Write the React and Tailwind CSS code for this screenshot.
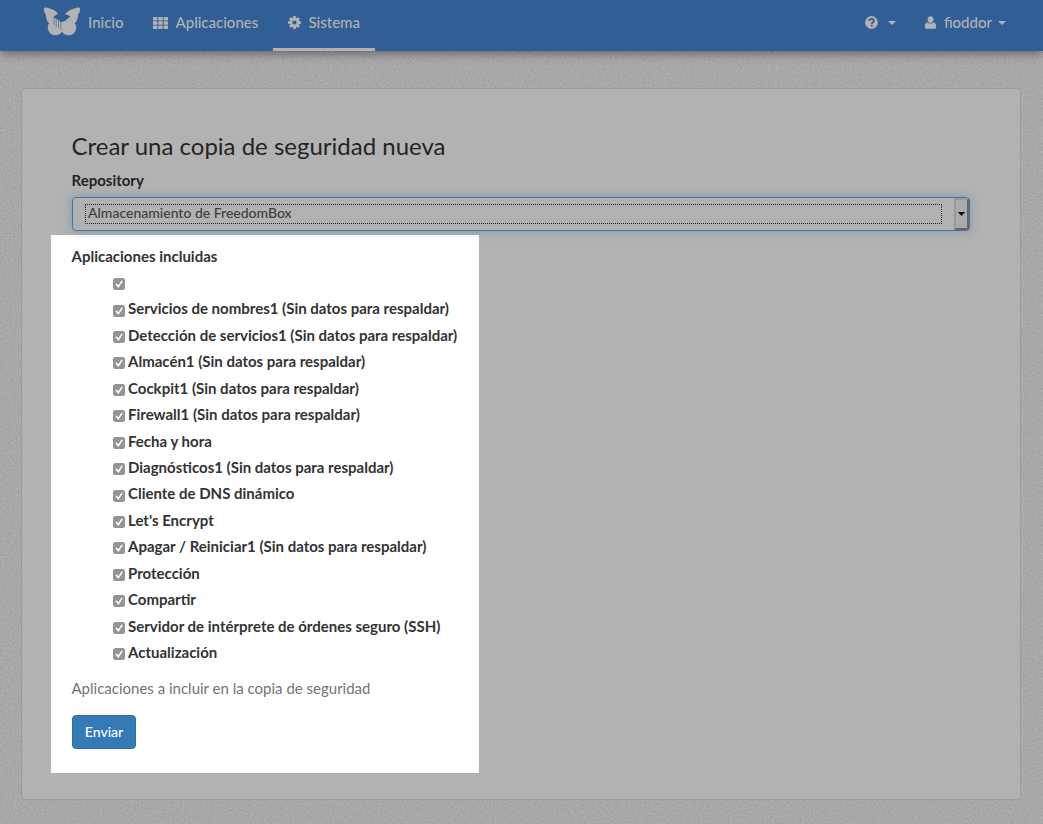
import React from "react";

const apps = [
  "",
  "Servicios de nombres1 (Sin datos para respaldar)",
  "Detección de servicios1 (Sin datos para respaldar)",
  "Almacén1 (Sin datos para respaldar)",
  "Cockpit1 (Sin datos para respaldar)",
  "Firewall1 (Sin datos para respaldar)",
  "Fecha y hora",
  "Diagnósticos1 (Sin datos para respaldar)",
  "Cliente de DNS dinámico",
  "Let's Encrypt",
  "Apagar / Reiniciar1 (Sin datos para respaldar)",
  "Protección",
  "Compartir",
  "Servidor de intérprete de órdenes seguro (SSH)",
  "Actualización",
];

function Butterfly() {
  return (
    <svg className="h-[30px] w-[38px] shrink-0" viewBox="0 0 38 30" fill="#b2b2b2">
      <path d="M.8 1.200C1.200.3 3 .5 5 1c5 1 8.500 3.200 10 6-2 .8-4 1.900-4.600 3.200L13.500 12l3.500 2 1.500 1.200 2-.7c1.800-.8 3.600-2.200 5-3.600l2-1.600c-.7-.6-2.500-1.300-5.600-2.100C24.500 4.200 28 1.800 33 .9c2-.4 3.600-.5 4 .5.3 2.600-.5 4.700-2 6.300.2 3.600-.9 6.600-3.300 8.600 1.600 1.700 1.900 4.200 1.100 6.700-1.200 3.800-4.400 5.600-8.200 5.200-2.600-.3-4.600-1.700-5.600-3.700-1 2-3 3.400-5.600 3.700-3.800.4-7-1.400-8.200-5.200-.8-2.500-.5-5 1.100-6.700C3.900 14.300 2.800 11.300 3 7.700 1.500 6.100.6 3.800.8 1.200Z" />
      <path d="M11 10v8M13.200 11.500v8.500M15.500 13v8M17.800 14v9" stroke="#305e95" strokeWidth=".55" />
    </svg>
  );
}

function GridIcon() {
  return (
    <svg className="h-[12px] w-[15px]" viewBox="0 0 15 12" fill="#b2b2b2">
      {[0, 4.300, 8.600].map((y) =>
        [0, 5.300, 10.600].map((x) => <rect key={`${x}-${y}`} x={x} y={y} width="4.400" height="3.400" rx=".5" />)
      )}
    </svg>
  );
}

function Cog() {
  return (
    <svg className="size-[13px]" viewBox="-6.5 -6.5 13 13" fill="#b2b2b2">
      {[0, 45, 90, 135].map((a) => (
        <rect key={a} x="-1.400" y="-6.400" width="2.800" height="12.800" rx=".4" transform={`rotate(${a})`} />
      ))}
      <circle r="4.800" />
      <circle r="2.100" fill="#305e95" />
    </svg>
  );
}

function Help() {
  return (
    <svg className="size-[13px]" viewBox="0 0 13 13">
      <circle cx="6.500" cy="6.500" r="6.400" fill="#b2b2b2" />
      <path d="M4.200 5.100C4.200 3.500 5.200 2.900 6.500 2.900S8.900 3.600 8.900 4.900C8.900 6.200 6.700 6.300 6.700 8" fill="none" stroke="#305e95" strokeWidth="1.700" />
      <path d="M5.800 8.800h1.800v1.600H5.800z" fill="#305e95" />
    </svg>
  );
}

function User() {
  return (
    <svg className="h-[13px] w-[11px]" viewBox="0 0 11 13" fill="#b2b2b2">
      <path d="M5.500.2C7.300.2 8.400 1.400 8.400 3.200 8.400 5.100 7.200 7 5.500 7S2.600 5.100 2.600 3.200C2.600 1.400 3.700.2 5.500.2Z" />
      <path d="M2.300 6.300C3.600 7.900 7.400 7.900 8.700 6.300 10.200 6.900 11 8 11 9.400v2.400q0 1-1 1H1q-1 0-1-1V9.400C0 8 .8 6.900 2.300 6.300Z" />
    </svg>
  );
}

function Caret() {
  return (
    <svg className="h-[4px] w-[8px]" viewBox="0 0 8 4" fill="#b2b2b2">
      <path d="M0 0h8L4 4z" />
    </svg>
  );
}

function Checkbox() {
  return (
    <svg className="mt-[3px] size-[12px] shrink-0" viewBox="0 0 12 12">
      <rect width="12" height="12" rx="2.500" fill="#949498" />
      <path d="M3.300 6.300l2 2.300L8.900 3.400" fill="none" stroke="#fff" strokeWidth="1.600" strokeLinecap="round" />
    </svg>
  );
}

function Noise() {
  return (
    <svg className="absolute inset-0 h-full w-full" aria-hidden="true">
      <filter id="grain" x="0" y="0" width="100%" height="100%" colorInterpolationFilters="sRGB">
        <feTurbulence type="fractalNoise" baseFrequency="0.6" numOctaves="2" seed="4" />
        <feColorMatrix values="0.12 0 0 0 0.6  0.12 0 0 0 0.6  0.12 0 0 0 0.6  0 0 0 0 1" />
      </filter>
      <rect width="100%" height="100%" filter="url(#grain)" />
    </svg>
  );
}

export default function App() {
  return (
    <div className="relative isolate flex h-[824px] w-[1043px] flex-col overflow-hidden bg-[#a8a8a8] font-['Lato',sans-serif] text-[15px] leading-[21.43px] text-[#333]">
      <div className="absolute inset-0 -z-10"><Noise /></div>
      <nav className="flex h-[51px] shrink-0 justify-between bg-[#305e95] pr-[37px] pl-[43px] font-medium text-[#b2b2b2] shadow-[0_2px_10px_rgba(0,0,0,0.45)]">
        <div className="flex">
          <a className="flex w-[95px] items-start gap-[7px] pt-[7px]">
            <Butterfly />
            <span className="pt-[5px]">Inicio</span>
          </a>
          <a className="flex w-[135px] items-center gap-[7.5px] pb-[6px] pl-[15px]">
            <GridIcon />
            <span>Aplicaciones</span>
          </a>
          <a className="flex w-[102px] items-center gap-[7.5px] border-b-[3px] border-[#b2b2b2] pb-[3px] pl-[15px]">
            <Cog />
            <span>Sistema</span>
          </a>
        </div>
        <div className="flex items-center gap-[29px] pb-[6px]">
          <a className="flex items-center gap-[10px]"><Help /><Caret /></a>
          <a className="flex items-center gap-[8px]">
            <User />
            <span className="flex items-center gap-[6px]">fioddor<Caret /></span>
          </a>
        </div>
      </nav>

      <main className="mt-[37px] ml-[21px] h-[712px] w-[1000px] rounded-[4px] border border-[#9b9b9b] bg-[#b2b2b2] pt-[44px] pr-[50px] pl-[49.5px]">
        <h3 className="text-[24px] leading-[26px] text-[#242424]">Crear una copia de seguridad nueva</h3>
        <label className="mt-[11px] block h-[27px] font-bold text-[#242424]">Repository</label>
        <div className="relative z-10 flex h-[34px] w-[898px] rounded-[4px] border border-[#4178a6] pl-[12px] text-[14px] font-medium text-[#3e3e3e] shadow-[0_0_8px_rgba(72,122,163,0.5)]">
          <div className="my-[6px] flex w-[857px] items-center border border-dotted border-[#222] pb-[2px] pl-[2.500px] leading-[16px]">Almacenamiento de FreedomBox</div>
          <div className="ml-auto flex w-[15px] items-center justify-center rounded-r-[2px] border-2 border-t-[#999] border-r-[#666] border-b-[#666] border-l-[#999] bg-[#aaa]">
            <svg className="h-[4px] w-[7px] shrink-0" viewBox="0 0 7 4"><path d="M0 0h7L3.500 4z" /></svg>
          </div>
        </div>

        <section className="mt-[4px] -ml-[20.500px] h-[538px] w-[428px] bg-white pt-[11px] pl-[20.500px]">
          <div className="h-[25.900px] font-bold">Aplicaciones incluidas</div>
          <ul className="pl-[41.500px]">
            {apps.map((name, i) => (
              <li key={i} className="flex h-[26.450px] items-start">
                <label className="flex h-[21.430px] items-center gap-[3px] font-bold whitespace-nowrap">
                  <Checkbox />
                  <span>{name}</span>
                </label>
              </li>
            ))}
          </ul>
          <p className="mt-[9.500px] text-[#737373]">Aplicaciones a incluir en la copia de seguridad</p>
          <button className="mt-[15.500px] ml-[0.500px] flex h-[34px] w-[64px] items-center justify-center rounded-[4px] border border-[#2e6da4] bg-[#337ab7] text-[14px] font-medium text-white">Enviar</button>
        </section>
      </main>
    </div>
  );
}
